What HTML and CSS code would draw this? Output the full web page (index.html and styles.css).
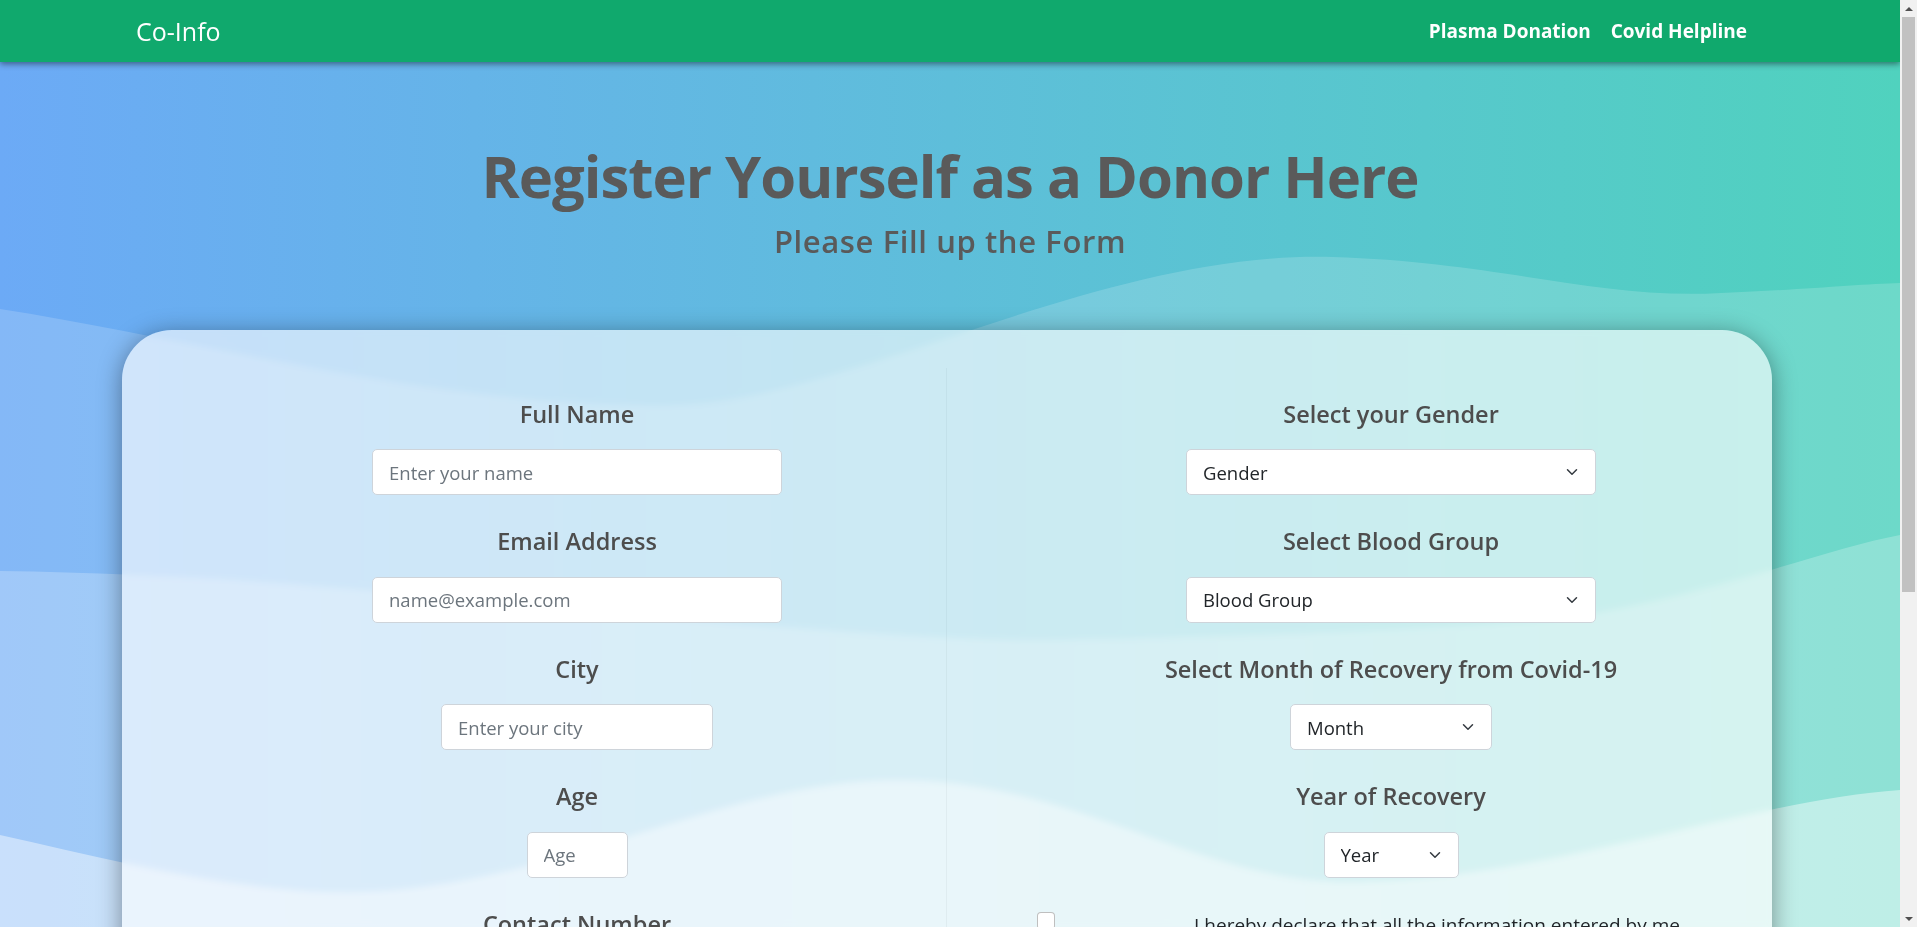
FILE: index.html
```html
<!DOCTYPE html>
<html lang="en">
<head>
<meta charset="utf-8">
<title>Co-Info | Register as a Plasma Donor</title>
<link rel="stylesheet" href="styles.css">
</head>
<body>
<svg class="bg-waves" viewBox="0 0 1900 927" preserveAspectRatio="none" aria-hidden="true">
  <defs>
    <linearGradient id="bgGrad" x1="0" y1="0" x2="1" y2="0">
      <stop offset="0" stop-color="#6caaf6"/>
      <stop offset="1" stop-color="#50d2be"/>
    </linearGradient>
  </defs>
  <rect width="1900" height="927" fill="url(#bgGrad)"/>
  <path class="wave wave-a" d="M0,309 C200,340 450,410 674,405 C850,400 1100,250 1333,257 C1500,262 1600,300 1721,293 C1800,290 1860,284 1900,283 L1900,927 L0,927 Z"/>
  <path class="wave wave-b" d="M0,571 C300,575 550,610 727,623 C900,636 1000,642 1055,640 C1300,635 1450,628 1551,620 C1700,600 1820,550 1900,535 L1900,927 L0,927 Z"/>
  <path class="wave wave-c" d="M0,835 C120,862 240,893 351,892 C550,890 720,780 897,780 C1080,780 1200,885 1358,882 C1550,878 1750,800 1900,790 L1900,927 L0,927 Z"/>
</svg>

<div class="scrollbar" aria-hidden="true">
  <span class="sb-btn sb-up"></span>
  <span class="sb-track"><span class="sb-thumb"></span></span>
  <span class="sb-btn sb-down"></span>
</div>

<nav class="navbar">
  <a class="brand" href="#">Co-Info</a>
  <ul class="nav-links">
    <li><a href="#">Plasma Donation</a></li>
    <li><a href="#">Covid Helpline</a></li>
  </ul>
</nav>

<header class="hero">
  <h1>Register Yourself as a Donor Here</h1>
  <h2>Please Fill up the Form</h2>
</header>

<main class="card">
  <form class="form-grid">
    <div class="col col-left">
      <div class="field">
        <label for="name">Full Name</label>
        <input id="name" class="ctl w-lg" type="text" placeholder="Enter your name">
      </div>
      <div class="field">
        <label for="email">Email Address</label>
        <input id="email" class="ctl w-lg" type="email" placeholder="name@example.com">
      </div>
      <div class="field">
        <label for="city">City</label>
        <input id="city" class="ctl w-md" type="text" placeholder="Enter your city">
      </div>
      <div class="field">
        <label for="age">Age</label>
        <input id="age" class="ctl w-xs" type="text" placeholder="Age">
      </div>
      <div class="field">
        <label for="phone">Contact Number</label>
        <input id="phone" class="ctl w-lg" type="tel" placeholder="Enter your number">
      </div>
    </div>
    <div class="col col-right">
      <div class="field">
        <label for="gender">Select your Gender</label>
        <div class="select-wrap w-lg">
          <select id="gender" class="ctl sel"><option>Gender</option><option>Male</option><option>Female</option><option>Other</option></select>
          <svg class="chev" viewBox="0 0 16 16"><path d="m2 5 6 6 6-6"/></svg>
        </div>
      </div>
      <div class="field">
        <label for="blood">Select Blood Group</label>
        <div class="select-wrap w-lg">
          <select id="blood" class="ctl sel"><option>Blood Group</option><option>A+</option><option>A-</option><option>B+</option><option>B-</option><option>AB+</option><option>AB-</option><option>O+</option><option>O-</option></select>
          <svg class="chev" viewBox="0 0 16 16"><path d="m2 5 6 6 6-6"/></svg>
        </div>
      </div>
      <div class="field">
        <label for="month">Select Month of Recovery from Covid-19</label>
        <div class="select-wrap w-sm">
          <select id="month" class="ctl sel"><option>Month</option><option>January</option><option>February</option><option>March</option></select>
          <svg class="chev" viewBox="0 0 16 16"><path d="m2 5 6 6 6-6"/></svg>
        </div>
      </div>
      <div class="field">
        <label for="year">Year of Recovery</label>
        <div class="select-wrap w-yr">
          <select id="year" class="ctl sel"><option>Year</option><option>2020</option><option>2021</option></select>
          <svg class="chev" viewBox="0 0 16 16"><path d="m2 5 6 6 6-6"/></svg>
        </div>
      </div>
      <div class="check-row">
        <input id="agree" class="check" type="checkbox">
        <label for="agree" class="decl">I hereby declare that all the information entered by me<br>is true and correct to the best of my knowledge.</label>
      </div>
    </div>
    <div class="submit-row">
      <button type="submit" class="btn">Register</button>
    </div>
  </form>
</main>

<footer class="footer">Co-Info &middot; Together against Covid-19</footer>
</body>
</html>
```

FILE: styles.css
```css
* { box-sizing: border-box; }
html, body { margin: 0; }
body {
  font-family: "Open Sans", "Noto Sans", sans-serif;
  color: #212529;
  min-height: 100vh;
  margin-right: 17px;
}
.bg-waves {
  position: fixed;
  top: 0;
  left: 0;
  width: calc(100% - 17px);
  height: 100%;
  z-index: -1;
  display: block;
}
.wave { fill: #fff; }
.wave-a { fill-opacity: .17; }
.wave-b { fill-opacity: .23; }
.wave-c { fill-opacity: .43; }

.scrollbar {
  position: fixed;
  top: 0;
  right: 0;
  width: 17px;
  height: 100vh;
  background: #f1f1f1;
  display: flex;
  flex-direction: column;
  z-index: 50;
}
.sb-btn { height: 17px; flex: none; display: flex; align-items: center; justify-content: center; }
.sb-up::before, .sb-down::before {
  content: "";
  width: 0;
  height: 0;
  border-left: 4px solid transparent;
  border-right: 4px solid transparent;
}
.sb-up::before { border-bottom: 4px solid #505050; }
.sb-down::before { border-top: 4px solid #505050; }
.sb-track { flex: 1; padding: 0 2px; }
.sb-thumb { display: block; height: 575px; background: #c1c1c1; }

.navbar {
  height: 62px;
  background: #10a96d;
  display: flex;
  align-items: center;
  justify-content: space-between;
  padding: 0 153px 0 136px;
  box-shadow: 0 2px 6px rgba(0,0,0,.45);
  position: relative;
  z-index: 2;
}
.brand { color: #fff; font-size: 25px; text-decoration: none; }
.nav-links { display: flex; gap: 20px; list-style: none; margin: 0; padding: 0; }
.nav-links a { color: #fff; font-weight: 700; font-size: 19px; text-decoration: none; }

.hero { text-align: center; padding: 79px 0 70px; color: #5a5a5a; }
.hero h1 { font-size: 58px; font-weight: 700; letter-spacing: -1px; line-height: 1.2; margin: 0 0 12px; }
.hero h2 { font-size: 31px; font-weight: 600; letter-spacing: .6px; line-height: 1.2; margin: 0; }

.card {
  width: 1650px;
  margin: 0 0 0 122px;
  border-radius: 50px;
  background: rgba(255,255,255,.62);
  box-shadow: 0 4px 24px rgba(0,0,0,.4);
  padding: 38px 0 60px;
  backdrop-filter: blur(3px);
}
.form-grid { display: grid; grid-template-columns: 1fr 1fr; }
.col-left { padding-left: 86px; border-right: 1px solid rgba(0,0,0,.04); }
.col-right { padding-left: 63px; }
.field { display: flex; flex-direction: column; align-items: center; padding-top: 32px; }
.field label {
  font-size: 23.5px;
  font-weight: 600;
  line-height: 29px;
  color: #4d4d4d;
  margin-bottom: 20.5px;
}
.ctl {
  height: 46px;
  font-family: inherit;
  font-size: 18.5px;
  padding: 0 16px;
  border: 1px solid #ced4da;
  border-radius: 5px;
  background: #fff;
  color: #212529;
}
.ctl::placeholder { color: #6c757d; }
.w-lg { width: 410px; }
.w-md { width: 272px; }
.w-xs { width: 101px; }
.w-sm { width: 202px; }
.w-yr { width: 135px; }
.select-wrap { position: relative; }
.sel { width: 100%; appearance: none; padding-right: 40px; }
.chev {
  position: absolute;
  right: 16px;
  top: 50%;
  width: 16px;
  height: 12px;
  margin-top: -6px;
  fill: none;
  stroke: #343a40;
  stroke-width: 2;
  stroke-linecap: round;
  stroke-linejoin: round;
  pointer-events: none;
}
.check-row { display: flex; align-items: flex-start; padding: 33.5px 0 0 27px; }
.check {
  appearance: none;
  width: 18px;
  height: 18px;
  margin: 1px 0 0;
  border: 1px solid rgba(0,0,0,.25);
  border-radius: 4px;
  background: #fff;
  flex: none;
}
.decl {
  margin-left: 132px;
  width: 500px;
  text-align: center;
  font-size: 19px;
  line-height: 1.5;
  color: #212529;
}
.submit-row { grid-column: 1 / -1; display: flex; justify-content: center; padding-top: 60px; }
.btn {
  font-family: inherit;
  font-size: 20px;
  font-weight: 700;
  color: #fff;
  background: #10a96d;
  border: 0;
  border-radius: 6px;
  padding: 10px 40px;
}
.footer { text-align: center; color: #fff; padding: 200px 0 40px; font-size: 16px; }
```
